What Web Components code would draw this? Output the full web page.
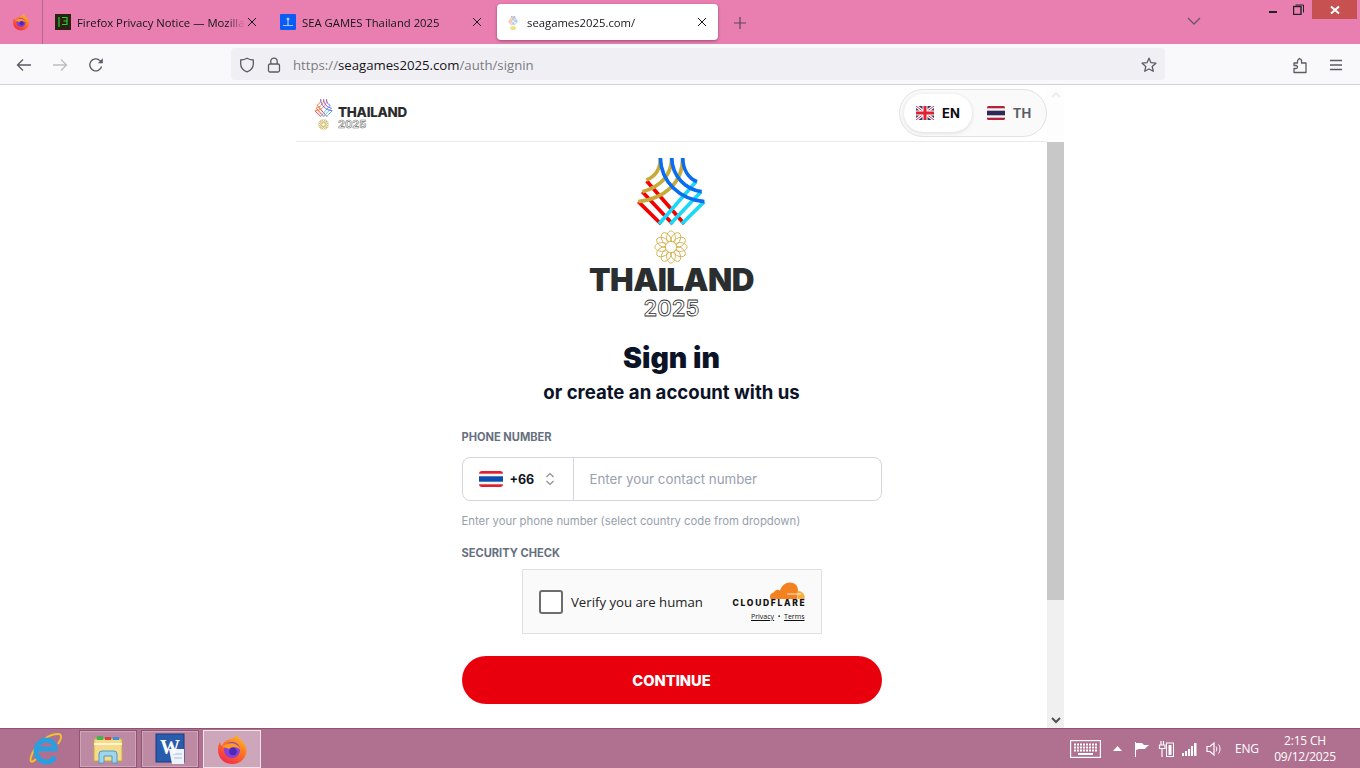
<!DOCTYPE html>
<html>
<head>
<meta charset="utf-8">
<title>seagames2025.com</title>
<style>
    html, body { margin: 0; height: 100%; overflow: hidden; }
    body { display: flex; flex-direction: column; width: 1360px; height: 768px; font-family: "Open Sans", "Liberation Sans", sans-serif; background: #fff; }
</style>
</head>
<body>
<browser-tabs></browser-tabs>
<browser-toolbar></browser-toolbar>
<signin-page></signin-page>
<win-taskbar></win-taskbar>

<script>
// every element here is just markup + style, so one small helper does the registering
function defineElement(tag, html) {
    const template = document.createElement("template");
    template.innerHTML = html;
    customElements.define(tag, class extends HTMLElement {
        constructor() {
            super();
            this.attachShadow({ mode: "open" });
            this.shadowRoot.appendChild(template.content.cloneNode(true));
        }
    });
}

const FIREFOX = (size) => `
    <svg width="${size}" height="${size}" viewBox="1 0 30 32">
        <defs>
            <linearGradient id="fx" x1="0.8" y1="0" x2="0.2" y2="1"><stop offset="0" stop-color="#ffc02e"/><stop offset="0.4" stop-color="#ff7a1f"/><stop offset="1" stop-color="#f0264f"/></linearGradient>
        </defs>
        <path fill="url(#fx)" d="M21 1c0 4 4 5 6 8 3 4 4 8 3 12-2 7-8 10-14 10C8 31 2 25 2 17c0-3 .5-6 2-8 0 2 1 3 2 4 1-3 3-5 6-6 3-1 7-2 9-6z"/>
        <circle cx="16" cy="17" r="8" fill="#8a3fd8"/>
        <path fill="#ff9a1f" d="M6 14c3-3 7-4.500 12-3.500 3 1 5.500 3 6.500 6.500-2-2-4.500-3-7.500-3-2 0-3 1-4 2-2-1-5-2-7-2z"/>
        <circle cx="17" cy="18.500" r="3.800" fill="#4a2bb8"/>
    </svg>`;

const LATTICE = (w, h, gold, blue, red, cyan) => `
    <svg width="${w}" height="${h}" viewBox="0 0 240 270" fill="none" stroke-width="11">
        <g stroke="${red}">
            <path d="M47 93 160 222M34 125 125 222M22 155 90 222"/>
        </g>
        <g stroke="${cyan}">
            <path d="M195 95 84 222M210 125 118 222M220 155 152 222"/>
        </g>
        <g stroke="${gold}">
            <path d="M88 24C88 58 72 80 46 90M122 24C122 78 84 112 34 125M155 24C155 100 100 146 22 155"/>
        </g>
        <g stroke="${blue}">
            <path d="M88 24C90 96 146 148 220 155M122 24C124 78 162 118 212 125M155 24C156 58 172 84 198 95"/>
        </g>
    </svg>`;

const FLOWER = (size, color, sw) => {
    let petals = "";
    for (let a = 0; a < 360; a += 30) {
        petals += `<ellipse cx="20" cy="9.500" rx="5.200" ry="8.500" transform="rotate(${a} 20 20)"/>`;
    }
    return `<svg width="${size}" height="${size}" viewBox="0 0 40 40" fill="none" stroke="${color}" stroke-width="${sw}">${petals}<circle cx="20" cy="20" r="6.500" fill="#fff"/></svg>`;
};

defineElement("browser-tab", `
    <style>
        :host { display: flex; align-items: center; width: 221px; height: 36px; margin: 4px 4px 0 0; padding: 0 8px; box-sizing: border-box; font: 11.300px "Open Sans", "Liberation Sans", sans-serif; color: #15141a; flex: none; position: relative; }
        :host([active]) { background: #fff; border-radius: 4px; box-shadow: 0 1px 3px rgba(90, 30, 60, .55); }
        .icon { width: 16px; height: 16px; flex: none; display: flex; align-items: center; justify-content: center; margin-right: 6px; }
        .label { flex: 1; min-width: 0; white-space: nowrap; overflow: hidden; -webkit-mask-image: linear-gradient(to right, #000 150px, transparent 168px); mask-image: linear-gradient(to right, #000 150px, transparent 168px); }
        svg { width: 10px; height: 10px; flex: none; margin-right: 3px; }
    </style>
    <span class="icon"><slot name="icon"></slot></span>
    <span class="label"><slot></slot></span>
    <svg viewBox="0 0 10 10" stroke="#15141a" stroke-width="1" fill="none"><path d="M1 1 9 9M9 1 1 9"/></svg>
`);

defineElement("browser-tabs", `
    <style>
        :host { display: flex; flex: none; height: 44px; background: #e87fb0; }
        .ff { width: 42px; height: 44px; border-right: 1px solid #b5688f; display: flex; align-items: center; justify-content: center; margin-right: 4px; box-sizing: content-box; }
        .plus { width: 16px; height: 16px; margin: 15px 0 0 10px; flex: none; }
        .chev { margin: 16px 0 0 auto; flex: none; }
        .win { display: flex; flex: none; height: 19px; margin: 0 3px 0 59px; }
        .win span { display: flex; align-items: center; justify-content: center; width: 26px; height: 19px; }
        .win span:nth-child(2) { padding-right: 2px; box-sizing: border-box; }
        .win .close { width: 45px; background: #c75050; }
    </style>
    <div class="ff">${FIREFOX(18)}</div>
    <browser-tab>
        <svg slot="icon" width="16" height="16" viewBox="0 0 16 16"><rect width="16" height="16" fill="#2a2013"/><path d="M4 3v10M7 3.500h5V7H8.500h3.500v3.500H7" fill="none" stroke="#24d12a" stroke-width="1.200"/></svg>
        Firefox Privacy Notice — Mozilla
    </browser-tab>
    <browser-tab>
        <svg slot="icon" width="16" height="16" viewBox="0 0 16 16"><rect width="16" height="16" rx="1" fill="#0a5cf5"/><circle cx="8" cy="5" r="1.500" fill="#a9c8ff"/><path d="M8 6v5M3 11.500h10" stroke="#a9c8ff" stroke-width="1.200"/></svg>
        SEA GAMES Thailand 2025
    </browser-tab>
    <browser-tab active>
        <span slot="icon" style="display:flex;flex-direction:column;align-items:center;width:12px">
            ${LATTICE(12, 12, "#f0a050", "#5a8fe8", "#ef6a5a", "#63c8ec")}
            <i style="display:block;width:6px;height:4px;border-radius:50%;background:#ecE48c;margin-top:-1px"></i>
        </span>
        seagames2025.com/
    </browser-tab>
    <svg class="plus" viewBox="0 0 16 16" stroke="#5b4a5c" stroke-width="1.200"><path d="M8 2v12M2 8h12"/></svg>
    <svg class="chev" width="14" height="10" viewBox="0 0 14 10" fill="none" stroke="#6b5468" stroke-width="1.300"><path d="M1 2l6 6 6-6"/></svg>
    <div class="win">
        <span><svg width="10" height="10" viewBox="0 0 10 10"><rect x="1" y="6" width="8" height="2" fill="#222"/></svg></span>
        <span><svg width="11" height="11" viewBox="0 0 11 11" fill="none" stroke="#222" stroke-width="1"><rect x=".5" y="2.500" width="7.500" height="8" stroke-width="1.400"/><path d="M2.500 1h8v7.500"/></svg></span>
        <span class="close"><svg width="10" height="10" viewBox="0 0 10 10" stroke="#fff" stroke-width="2" fill="none"><path d="M1 1.500 9 8.500M9 1.500 1 8.500"/></svg></span>
    </div>
`);

defineElement("tool-button", `
    <style>
        :host { display: flex; width: 36px; height: 36px; padding-top: 2px; box-sizing: border-box; align-items: center; justify-content: center; flex: none; }
    </style>
    <slot></slot>
`);

defineElement("browser-toolbar", `
    <style>
        :host { display: flex; align-items: center; flex: none; height: 40px; padding: 0 6px; background: #f9f9fb; border-bottom: 1px solid #cfcfd8; }
        svg { display: block; }
        .url { display: flex; align-items: center; width: 934px; height: 32px; margin-left: 117px; background: #f0f0f4; border-radius: 4px; flex: none; padding: 1px 8px 0; box-sizing: border-box; font: 13.200px "Open Sans", "Liberation Sans", sans-serif; color: #7b7b82; }
        .shield { margin-right: 12px; }
        .lock { margin-right: 12px; }
        .host { color: #15141a; }
        .txt { flex: 1; white-space: nowrap; }
        .right { margin-left: auto; display: flex; }
    </style>
    <tool-button><svg width="16" height="16" viewBox="0 0 16 16" fill="none" stroke="#5b5b66" stroke-width="1.300"><path d="M15 8H1.500M7 2.500 1.500 8 7 13.500"/></svg></tool-button>
    <tool-button><svg width="16" height="16" viewBox="0 0 16 16" fill="none" stroke="#bcbcc2" stroke-width="1.300"><path d="M1 8h13.500M9 2.500 14.500 8 9 13.500"/></svg></tool-button>
    <tool-button><svg width="16" height="16" viewBox="0 0 16 16" fill="none" stroke="#5b5b66" stroke-width="1.300"><path d="M13.600 9.500A6 6 0 1 1 12 3.600L14 5.500"/><path fill="#5b5b66" stroke="none" d="M14.800 1.200v5h-5z"/></svg></tool-button>
    <div class="url">
        <svg class="shield" width="16" height="16" viewBox="0 0 16 16" fill="none" stroke="#5b5b66" stroke-width="1.300"><path d="M8 1.200c2 1.200 4 1.700 6.300 1.800v4c0 3.600-2.500 6.400-6.300 7.800C4.200 13.400 1.700 10.600 1.700 7V3C4 2.900 6 2.400 8 1.200z"/></svg>
        <svg class="lock" width="14" height="16" viewBox="0 0 14 16" fill="none" stroke="#5b5b66" stroke-width="1.300"><rect x="1.500" y="7" width="11" height="8" rx="1.500"/><path d="M3.800 7V4.300a3.200 3.200 0 0 1 6.400 0V7"/></svg>
        <span class="txt">https://<span class="host">seagames2025.com</span>/auth/signin</span>
        <svg width="16" height="16" viewBox="0 0 16 16" fill="none" stroke="#5b5b66" stroke-width="1.300" stroke-linejoin="round"><path d="M8 1.200l2 4.500 4.900.5-3.700 3.300 1.100 4.800L8 12l-4.300 2.300 1.100-4.800L1.100 6.200 6 5.700z"/></svg>
    </div>
    <div class="right">
        <tool-button><svg width="16" height="17" viewBox="0 0 16 17" fill="none" stroke="#5b5b66" stroke-width="1.300" stroke-linejoin="round"><path d="M2 6h3.500V4.500a1.800 1.800 0 0 1 1-2l1-1 1.500 1a2 2 0 0 1 .5 2V6H14v9.500H2V11.500h2a1.500 1.500 0 0 0 0-3H2z"/></svg></tool-button>
        <tool-button><svg width="14" height="12" viewBox="0 0 14 12" stroke="#5b5b66" stroke-width="1.300"><path d="M1 1.500h12M1 6h12M1 10.500h12"/></svg></tool-button>
    </div>
`);

defineElement("lang-switch", `
    <style>
        :host { display: flex; align-items: center; width: 148px; height: 48px; box-sizing: border-box; padding: 4px; border: 1px solid #e2e2e4; border-radius: 24px; background: #fafafa; font: 700 13px "Inter", "Liberation Sans", sans-serif; flex: none; }
        .opt { display: flex; align-items: center; gap: 8px; height: 38px; padding: 0 12px; box-sizing: border-box; }
        .on { width: 68px; background: #fff; border-radius: 19px; box-shadow: 0 1px 4px rgba(0, 0, 0, .13); color: #0b0b12; }
        .off { color: #5d5d68; padding-left: 15px; }
    </style>
    <div class="opt on">
        <svg width="18" height="14" viewBox="0 0 18 14"><rect width="18" height="14" rx="1.500" fill="#2a3a7a"/><path d="M0 0l18 14M18 0 0 14" stroke="#fff" stroke-width="3"/><path d="M0 0l18 14M18 0 0 14" stroke="#d8313f" stroke-width="1"/><path d="M9 0v14M0 7h18" stroke="#fff" stroke-width="5"/><path d="M9 0v14M0 7h18" stroke="#e0202e" stroke-width="3"/></svg>
        EN
    </div>
    <div class="opt off">
        <svg width="18" height="14" viewBox="0 0 18 14"><rect width="18" height="14" rx="1.500" fill="#b3233c"/><rect y="2.300" width="18" height="9.400" fill="#f4f4f4"/><rect y="4.700" width="18" height="4.600" fill="#2d2a55"/></svg>
        TH
    </div>
`);

defineElement("small-logo", `
    <style>
        :host { display: grid; grid-template-columns: 25px auto; align-items: start; width: 94px; flex: none; font-family: "Inter", "Liberation Sans", sans-serif; color: #2a2c2c; }
        .mark { display: flex; flex-direction: column; align-items: center; width: 20px; }
        .mark svg:last-child { margin-top: -2px; }
        .t { font-weight: 800; font-size: 13.400px; line-height: 14px; letter-spacing: -.25px; margin-top: 8px; white-space: nowrap; }
        .y { font-weight: 700; font-size: 11px; line-height: 11px; color: transparent; -webkit-text-stroke: .6px #777; }
    </style>
    <div class="mark">
        ${LATTICE(21, 24, "#ef8f2c", "#7a5cf0", "#f0303a", "#4fc6f0")}
        ${FLOWER(11, "#c9b65a", 2)}
    </div>
    <div><div class="t">THAILAND</div><div class="y">2025</div></div>
`);

defineElement("site-header", `
    <style>
        :host { display: flex; align-items: center; justify-content: space-between; flex: none; height: 57px; padding: 0 0 0 17px; box-sizing: border-box; border-bottom: 1px solid #e9e9e9; }
    </style>
    <small-logo></small-logo>
    <lang-switch></lang-switch>
`);

defineElement("main-logo", `
    <style>
        :host { display: flex; flex-direction: column; align-items: center; font-family: "Inter", "Liberation Sans", sans-serif; }
        svg { display: block; }
        .flower { margin-top: -10px; }
        .t { font-weight: 900; font-size: 31.500px; line-height: 30px; letter-spacing: -.55px; color: #2b2e2f; margin-top: 1px; }
        .y { font-weight: 600; font-size: 22px; line-height: 22px; margin-top: 2px; color: transparent; -webkit-text-stroke: .8px #333; }
    </style>
    ${LATTICE(80, 90, "#c9ab3c", "#0a6cf0", "#f40000", "#1ad8f8")}
    <div class="flower">${FLOWER(34, "#cfb04a", 1)}</div>
    <div class="t">THAILAND</div>
    <div class="y">2025</div>
`);

defineElement("field-label", `
    <style>
        :host { display: block; font: 700 11.100px/14px "Inter", "Liberation Sans", sans-serif; color: #667080; }
    </style>
    <slot></slot>
`);

defineElement("phone-input", `
    <style>
        :host { display: flex; height: 44px; box-sizing: border-box; border: 1px solid #d3d6dd; border-radius: 8px; background: #fff; font: 13.300px "Inter", "Liberation Sans", sans-serif; }
        .code { display: flex; align-items: center; width: 111px; box-sizing: border-box; border-right: 1px solid #d3d6dd; padding-left: 16px; font-weight: 700; font-size: 12.500px; color: #0c1322; }
        .code svg:first-child { margin-right: 7px; }
        .code svg:last-child { margin-left: 11px; }
        .ph { display: flex; align-items: center; padding-left: 16px; color: #9aa1af; }
    </style>
    <div class="code">
        <svg width="24" height="16" viewBox="0 0 24 16"><rect width="24" height="16" rx="3" fill="#e0202e"/><rect y="2.700" width="24" height="10.600" fill="#f6f6f6"/><rect y="5.300" width="24" height="5.400" fill="#0b4fae"/></svg>
        +66
        <svg width="10" height="14" viewBox="0 0 10 14" fill="none" stroke="#8a8f98" stroke-width="1.200"><path d="M1.500 5 5 1.500 8.500 5M1.500 9 5 12.500 8.500 9"/></svg>
    </div>
    <div class="ph">Enter your contact number</div>
`);

defineElement("turnstile-box", `
    <style>
        :host { display: flex; align-items: center; width: 300px; height: 65px; box-sizing: border-box; border: 1px solid #e0e0e0; background: #fafafa; font: 13.200px "Open Sans", "Liberation Sans", sans-serif; color: #232323; }
        .check { width: 24px; height: 24px; box-sizing: border-box; border: 2px solid #6d6d6d; border-radius: 3px; background: #fff; margin: 0 8.500px 0 16px; flex: none; }
        .txt { flex: 1; }
        .cf { display: flex; flex-direction: column; align-items: flex-end; margin-right: 16px; color: #111; }
        .name { font: 800 8.500px/10px "Inter", "Liberation Sans", sans-serif; letter-spacing: 1.700px; margin: -1px -2px 0 0; }
        .links { font: 7px/10px "Open Sans", "Liberation Sans", sans-serif; margin-top: 4px; }
        u { text-underline-offset: 1px; }
    </style>
    <div class="check"></div>
    <div class="txt">Verify you are human</div>
    <div class="cf">
        <svg width="36" height="18" viewBox="0 0 36 18"><path fill="#f48120" d="M27 18H1.500C.5 15.500 1 12 5 11.500 6 8.500 9 8 11 9.500 13 3 19 0 24 2c3 1 5 4 5 7l-1 9z"/><path fill="#faad3f" d="M28.500 18h7c1-4-2-8-6-8-1 0-1 .5-1 1z"/><path stroke="#fff" stroke-width=".8" d="M18 13h14"/></svg>
        <div class="name">CLOUDFLARE</div>
        <div class="links"><u>Privacy</u> &nbsp;•&nbsp; <u>Terms</u></div>
    </div>
`);

defineElement("big-button", `
    <style>
        :host { display: flex; align-items: center; justify-content: center; height: 48px; padding-top: 1px; box-sizing: border-box; border-radius: 24px; background: #e8000d; color: #fff; font: 800 14.700px "Inter", "Liberation Sans", sans-serif; flex: none; }
    </style>
    <slot></slot>
`);

defineElement("signin-form", `
    <style>
        :host { display: flex; flex-direction: column; align-items: center; flex: 1; min-height: 0; padding-top: 8px; overflow: hidden; font-family: "Inter", "Liberation Sans", sans-serif; }
        h1 { margin: 22px 0 0; font-weight: 900; font-size: 28.500px; line-height: 34px; color: #0b1327; }
        h2 { margin: 4px 0 0; font-weight: 700; font-size: 18.600px; line-height: 26px; color: #0b1327; }
        .col { width: 420px; display: flex; flex-direction: column; margin-top: 25px; }
        .hint { font-size: 11.300px; line-height: 14px; color: #98a0ae; margin: 13px 0 18px; }
        field-label.first { margin-bottom: 13px; }
        turnstile-box { align-self: center; margin: 9px 0 22px; }
    </style>
    <main-logo></main-logo>
    <h1>Sign in</h1>
    <h2>or create an account with us</h2>
    <div class="col">
        <field-label class="first">PHONE NUMBER</field-label>
        <phone-input></phone-input>
        <div class="hint">Enter your phone number (select country code from dropdown)</div>
        <field-label>SECURITY CHECK</field-label>
        <turnstile-box></turnstile-box>
        <big-button>CONTINUE</big-button>
    </div>
`);

defineElement("page-scrollbar", `
    <style>
        :host { display: flex; flex-direction: column; width: 17px; flex: none; background: #fdfdfd; }
        .top { height: 57px; display: flex; justify-content: center; padding-top: 6px; box-sizing: border-box; }
        .thumb { height: 458px; background: #c8c8c8; flex: none; }
        .track { flex: 1; background: #f0f0f0; display: flex; align-items: flex-end; justify-content: center; padding-bottom: 4px; }
    </style>
    <div class="top"><svg width="10" height="7" viewBox="0 0 10 7" fill="none" stroke="#eeeeee" stroke-width="2"><path d="M1 6l4-4 4 4"/></svg></div>
    <div class="thumb"></div>
    <div class="track"><svg width="10" height="7" viewBox="0 0 10 7" fill="none" stroke="#505050" stroke-width="2"><path d="M1 1l4 4 4-4"/></svg></div>
`);

defineElement("signin-page", `
    <style>
        :host { display: flex; justify-content: center; flex: 1; min-height: 0; background: #fff; }
        .wrap { display: flex; width: 768px; }
        .main { display: flex; flex-direction: column; flex: 1; min-width: 0; }
    </style>
    <div class="wrap">
        <div class="main">
            <site-header></site-header>
            <signin-form></signin-form>
        </div>
        <page-scrollbar></page-scrollbar>
    </div>
`);

defineElement("task-button", `
    <style>
        :host { display: flex; align-items: center; justify-content: center; width: 58px; height: 38px; box-sizing: border-box; border: 1px solid #8f5673; box-shadow: inset 0 0 0 1px rgba(255, 255, 255, .25); background: rgba(255, 255, 255, .18); flex: none; }
        :host([active]) { background: rgba(255, 255, 255, .38); border-color: #f1e3ea; box-shadow: none; }
    </style>
    <slot></slot>
`);

defineElement("win-taskbar", `
    <style>
        :host { display: flex; align-items: center; flex: none; height: 40px; box-sizing: border-box; border-top: 1px solid #8c5473; background: #b0708f; color: #fff; font: 12px "Open Sans", "Liberation Sans", sans-serif; padding-right: 20px; }
        .ie { width: 34px; margin: 0 16px 0 29px; flex: none; display: flex; }
        .btns { display: flex; gap: 4px; }
        .tray { margin-left: auto; display: flex; align-items: center; }
        .tray svg { display: block; flex: none; }
        .eng { margin: 0 10px 0 13px; width: 25px; letter-spacing: -.2px; }
        .clock { width: 70px; text-align: center; line-height: 16px; white-space: nowrap; letter-spacing: -.2px; }
    </style>
    <div class="ie">
        <svg width="34" height="34" viewBox="0 0 34 34" fill="none">
            <path d="M7 27C1 33 0 28 4 20 9 10 20 2 29 2c5 0 3 6 0 10" stroke="#f0c030" stroke-width="2"/>
            <path d="M8 17h18C26 11 22 8 17 8S7 13 7 19s5 11 10 11c4 0 7-2 9-5" stroke="#2a9fe0" stroke-width="5"/>
        </svg>
    </div>
    <div class="btns">
        <task-button>
            <svg width="32" height="32" viewBox="0 0 32 32"><path d="M2 6h28v22H2z" fill="#f4dc8c" stroke="#c9a93f"/><rect x="5" y="3" width="6" height="4" fill="#43b649"/><rect x="13" y="4" width="6" height="3" fill="#d9443a"/><rect x="21" y="4" width="6" height="3" fill="#3d8fe0"/><path d="M2 11h28" stroke="#fff6cf" stroke-width="2"/><path d="M7 30V21a3 3 0 0 1 3-3h12a3 3 0 0 1 3 3v9h-5v-7h-8v7z" fill="#9fd4ec" stroke="#4d9cc4"/></svg>
        </task-button>
        <task-button>
            <svg width="30" height="32" viewBox="0 0 30 32" style="font-family:'Liberation Serif',serif"><rect x="1" y="1" width="28" height="28" fill="#2a5cae" stroke="#173a80"/><path d="M14 16h15v15H17z" fill="#eef3fa"/><path d="M18 21h9M19 25h8" stroke="#a9bfdc"/><text x="15" y="21" text-anchor="middle" font-size="20" font-weight="700" fill="#fff">W</text></svg>
        </task-button>
        <task-button active>${FIREFOX(32)}</task-button>
    </div>
    <div class="tray">
        <svg width="31" height="18" viewBox="0 0 31 18" fill="none" stroke="#fff"><rect x=".5" y=".5" width="30" height="17" stroke-width="1.400"/><path d="M4 4.500h23M4 7.500h23M4 10.500h23" stroke-width="2" stroke-dasharray="2 1"/><path d="M8 14h15" stroke-width="2"/></svg>
        <svg style="margin-left:12px" width="9" height="5" viewBox="0 0 9 5" fill="#fff"><path d="M0 5 4.500 0 9 5z"/></svg>
        <svg style="margin-left:12px" width="16" height="16" viewBox="0 0 16 16" fill="none" stroke="#fff"><path d="M1.500 16V1"/><path d="M2 2h6l2 2h5l-4 3.500 1 .5H5L2 9z" fill="#fff" stroke="none"/></svg>
        <svg style="margin-left:8px" width="16" height="16" viewBox="0 0 16 16" fill="none" stroke="#fff"><path d="M3 0v4M5.500 0v4M1.500 4h5.500v3.500H1.500zM4 7.500V16" stroke-width="1.200"/><rect x="8.500" y="2" width="7" height="13.500"/><rect x="10.500" y="4" width="3" height="10" fill="#fff" stroke="none"/></svg>
        <svg style="margin-left:8px" width="16" height="16" viewBox="0 0 16 16" fill="#fff"><rect x="0" y="12" width="2" height="3"/><rect x="3" y="10" width="2" height="5"/><rect x="6" y="8" width="2" height="7"/><rect x="9" y="5" width="2" height="10"/><rect x="12" y="2" width="2.500" height="13"/></svg>
        <svg style="margin-left:8px" width="16" height="16" viewBox="0 0 16 16" fill="none" stroke="#fff"><path d="M1 5.500h3L8 2v12L4 10.500H1z" stroke-width="1.200"/><path d="M10 5.500c1 1.500 1 3.500 0 5M12.500 3.500c2 2.500 2 6.500 0 9"/></svg>
        <span class="eng">ENG</span>
        <div class="clock">2:15 CH<br>09/12/2025</div>
    </div>
`);
</script>
</body>
</html>
